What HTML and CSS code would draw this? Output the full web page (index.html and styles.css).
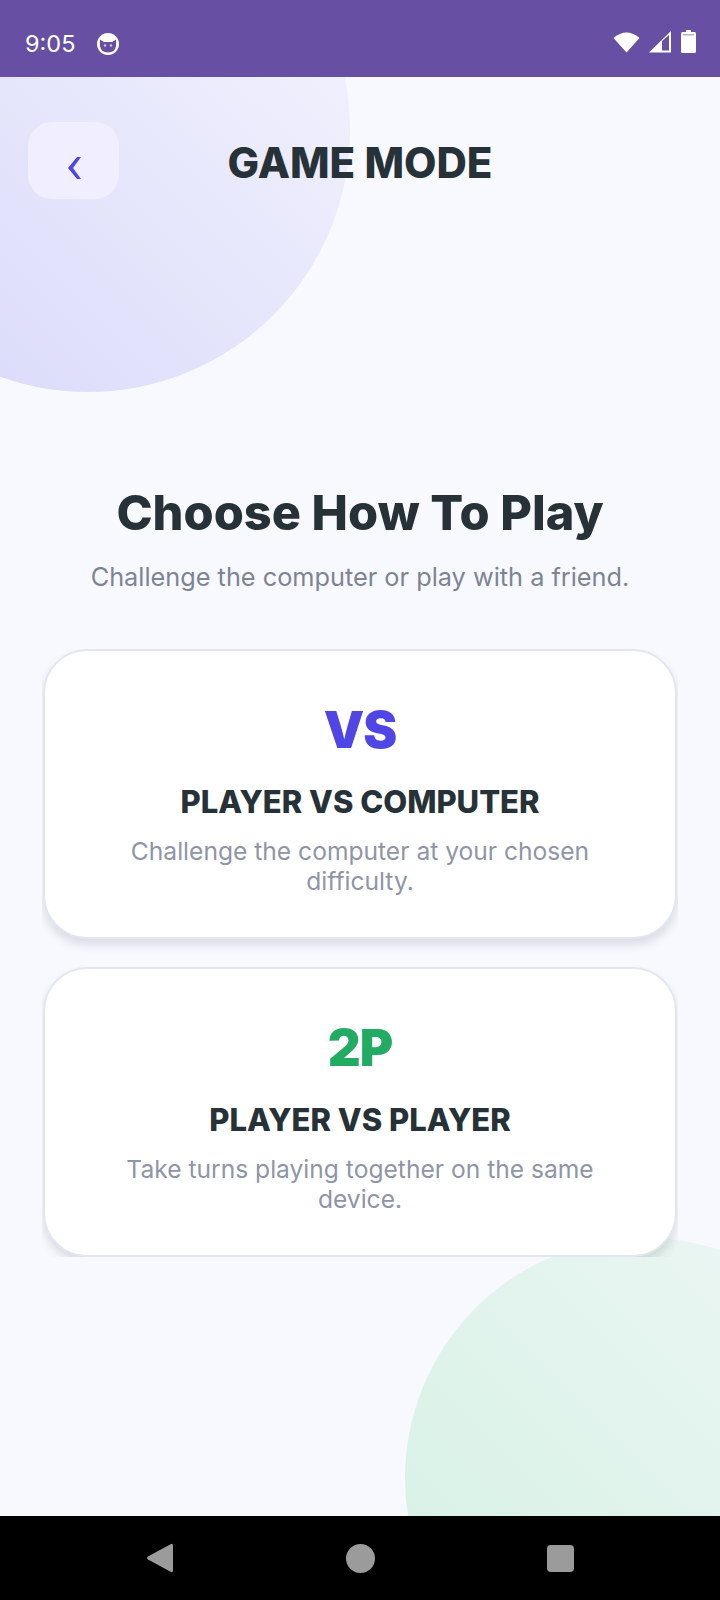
FILE: index.html
```html
<!DOCTYPE html>
<html lang="en">
<head>
    <meta charset="UTF-8">
    <meta name="viewport" content="width=device-width, initial-scale=1.0">
    <title>Game Mode</title>
    <link rel="stylesheet" href="styles.css">
</head>
<body>
    <div id="app">
        <div class="status-bar">
            <div class="status-left">
                <span class="status-time">9:05</span>
                <svg class="status-cat" width="24" height="24" viewBox="0 0 24 24">
                    <circle cx="12" cy="12" r="11" fill="#fff"/>
                    <path d="M4 7.5 L8 10 H16 L20 7.5 V14 Q19 20.5 12 20.5 Q5 20.5 4 14 Z" fill="#6750a4"/>
                    <circle cx="9" cy="13.5" r="1.2" fill="#cfc6e6"/>
                    <circle cx="15" cy="13.5" r="1.2" fill="#cfc6e6"/>
                </svg>
            </div>
            <div class="status-right">
                <svg width="27" height="22" viewBox="0 0 27 22">
                    <path d="M0.5 7 Q13.5 -4 26.5 7 L13.5 21.5 Z" fill="#fff"/>
                </svg>
                <svg width="23" height="22" viewBox="0 0 23 22">
                    <path d="M0 21.5 L22 0 V21.5 Z" fill="#fff"/>
                    <path d="M13 19.5 V10 L20 4 V19.5 Z" fill="#6750a4"/>
                </svg>
                <svg width="15" height="23" viewBox="0 0 15 23">
                    <path d="M5 0 H10 V2 H13.5 Q15 2 15 3.5 V21.5 Q15 23 13.5 23 H1.5 Q0 23 0 21.5 V3.5 Q0 2 1.5 2 H5 Z" fill="#fff"/>
                    <rect x="2" y="4" width="11" height="1.5" fill="#b9acd6"/>
                </svg>
            </div>
        </div>

        <div class="screen">
            <div class="blob blob-top"></div>
            <div class="blob blob-bottom"></div>

            <div class="header">
                <div class="back-btn">
                    <svg width="14" height="22" viewBox="0 0 14 22">
                        <path d="M10 0 H14 L6 11 L14 22 H10 L1 11 Z" fill="#4f46e5"/>
                    </svg>
                </div>
                <h1 class="header-title">GAME MODE</h1>
            </div>

            <div class="content">
                <h2 class="main-title">Choose How To Play</h2>
                <p class="main-sub">Challenge the computer or play with a friend.</p>

                <div class="cards">
                    <div class="card">
                        <div class="card-badge badge-vs">VS</div>
                        <div class="card-title">PLAYER VS COMPUTER</div>
                        <p class="card-text">Challenge the computer at your chosen difficulty.</p>
                    </div>
                    <div class="card">
                        <div class="card-badge badge-2p">2P</div>
                        <div class="card-title">PLAYER VS PLAYER</div>
                        <p class="card-text">Take turns playing together on the same device.</p>
                    </div>
                </div>
            </div>
        </div>

        <div class="nav-bar">
            <svg width="28" height="30" viewBox="0 0 28 30">
                <path d="M25 1 Q27 0 27 3 V27 Q27 30 25 29 L2 16.5 Q0 15 2 13.5 Z" fill="#9b9b9b"/>
            </svg>
            <div class="nav-home"></div>
            <div class="nav-recent"></div>
        </div>
    </div>
</body>
</html>
```

FILE: styles.css
```css
* {
    box-sizing: border-box;
}
body {
    font-family: 'Inter', 'Liberation Sans', sans-serif;
    margin: 0;
    padding: 0;
    background-color: #f8f9ff;
}
#app {
    display: flex;
    flex-direction: column;
    height: 1600px;
    overflow: hidden;
}
.status-bar {
    height: 77px;
    padding: 8px 24px 0 25px;
    background-color: #6750a4;
    color: #fff;
    display: flex;
    align-items: center;
    justify-content: space-between;
    position: relative;
    z-index: 2;
}
.status-left {
    display: flex;
    align-items: center;
    gap: 21px;
    padding-top: 2px;
}
.status-time {
    font-size: 23.5px;
}
.status-right {
    display: flex;
    align-items: center;
    gap: 9px;
    margin-top: -2px;
}
.screen {
    flex: 1;
    position: relative;
    overflow: hidden;
    background-color: #f8f9ff;
}
.blob {
    position: absolute;
    border-radius: 50%;
}
.blob-top {
    width: 524px;
    height: 524px;
    left: -174px;
    top: -209px;
    background: linear-gradient(45deg, #d6d7f9, #f6f6fe);
}
.blob-bottom {
    width: 480px;
    height: 480px;
    left: 405px;
    top: 1161px;
    background: linear-gradient(45deg, #d3f1e3, #eef6f5);
}
.header {
    position: relative;
    height: 122px;
    padding: 45px 28px 0;
    display: grid;
    grid-template-columns: 91px 1fr 91px;
}
.back-btn {
    width: 91px;
    height: 77px;
    border-radius: 24px;
    background-color: #f0eeff;
    display: flex;
    align-items: center;
    justify-content: center;
    padding-top: 14px;
}
.header-title {
    margin: 0;
    padding-top: 16px;
    text-align: center;
    font-size: 42px;
    line-height: 50px;
    font-weight: 800;
    color: #263238;
    white-space: nowrap;
}
.content {
    position: relative;
    padding: 0 42px;
    text-align: center;
}
.main-title {
    margin: 0;
    padding-top: 284px;
    font-size: 48.7px;
    line-height: 60px;
    font-weight: 800;
    color: #263238;
}
.main-sub {
    margin: 18px 0 0;
    font-size: 25.3px;
    line-height: 32px;
    color: #7c8496;
}
.cards {
    margin-top: 56px;
    overflow: hidden;
}
.card {
    margin: 0 1px 28px;
    height: 290px;
    padding: 49px 40px 0;
    background-color: #fff;
    border: 2px solid #e4e5f2;
    border-radius: 44px;
    box-shadow: 0 6px 10px rgba(38, 50, 56, 0.14);
}
.card:last-child {
    margin-bottom: 0;
}
.card-badge {
    font-size: 51px;
    line-height: 60px;
    font-weight: 900;
    letter-spacing: -1px;
}
.badge-vs {
    color: #4f46e5;
}
.badge-2p {
    color: #22ab63;
}
.card-title {
    margin-top: 23px;
    font-size: 31px;
    line-height: 38px;
    font-weight: 800;
    color: #263238;
}
.card-text {
    margin: 15px 0 0;
    font-size: 24.6px;
    line-height: 30px;
    color: #8f95a8;
}
.nav-bar {
    height: 84px;
    background-color: #000;
    position: relative;
    z-index: 2;
    padding: 0 0 0 146px;
    display: flex;
    align-items: center;
}
.nav-home {
    width: 29px;
    height: 29px;
    margin-left: 172px;
    border-radius: 50%;
    background-color: #9b9b9b;
}
.nav-recent {
    width: 27px;
    height: 27px;
    margin-left: 172px;
    border-radius: 4px;
    background-color: #9b9b9b;
}
```
